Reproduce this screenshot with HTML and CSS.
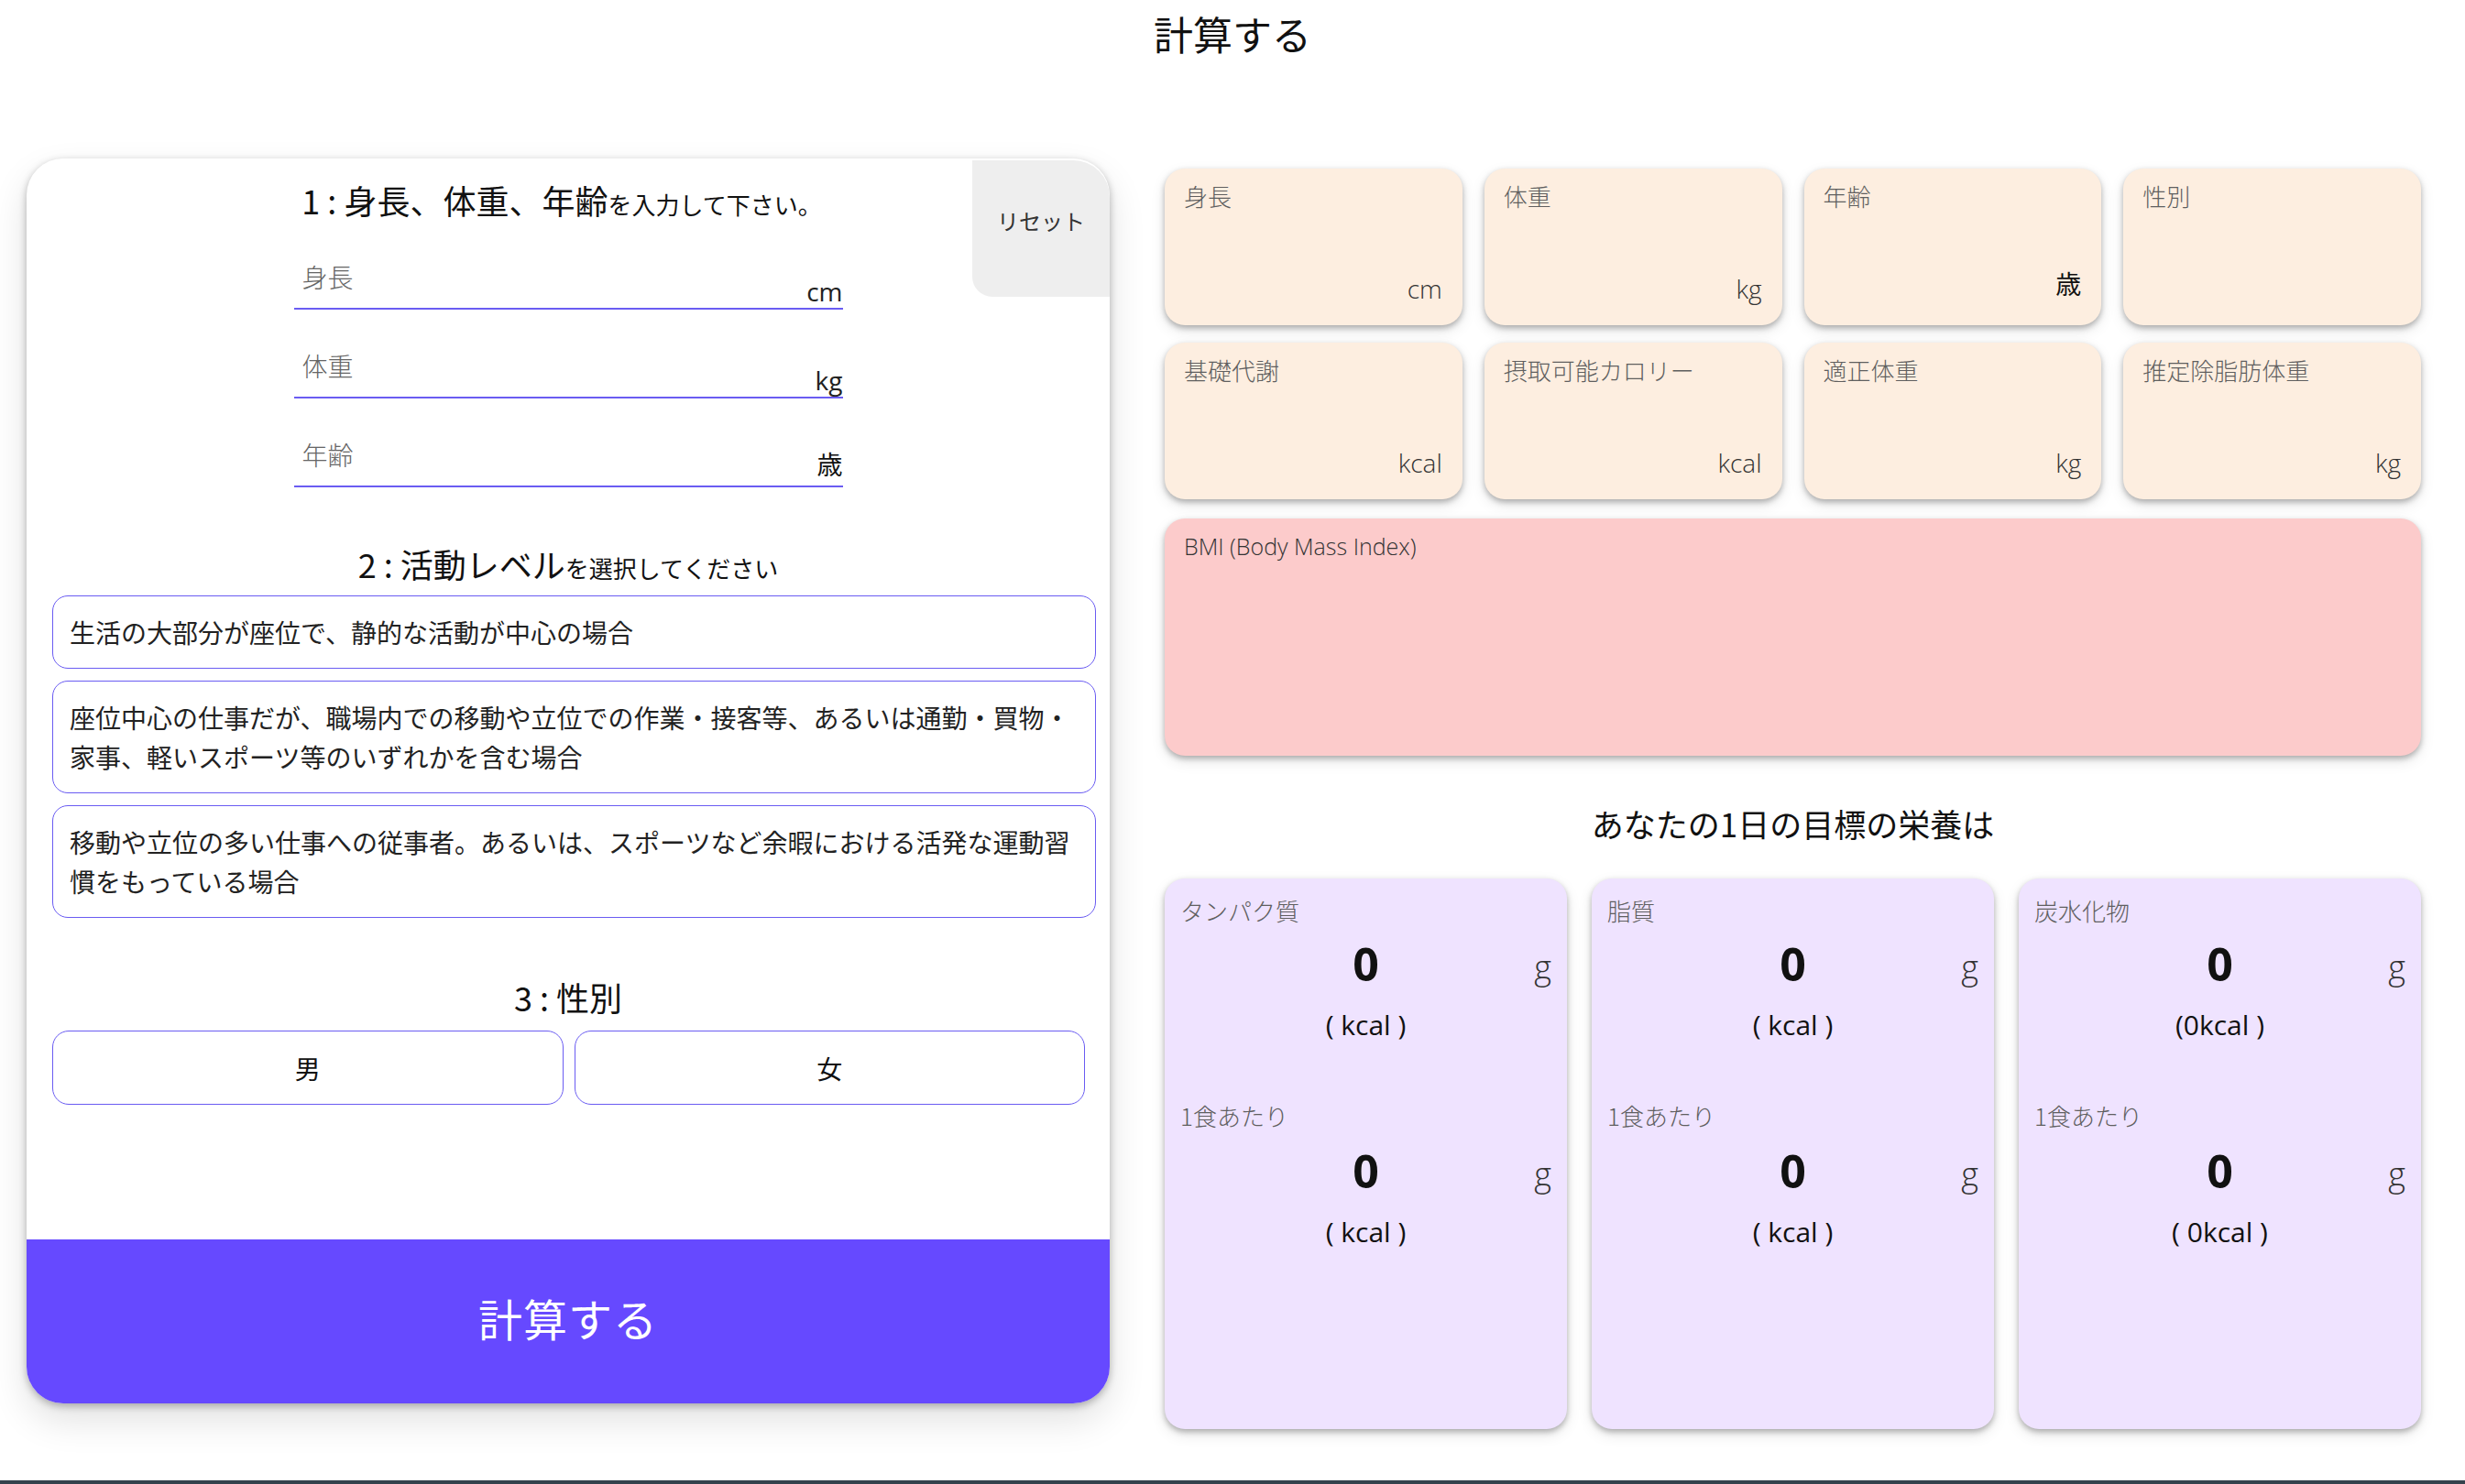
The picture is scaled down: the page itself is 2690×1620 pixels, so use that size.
FILE: index.html
```html
<!DOCTYPE html>
<html lang="ja">
<head>
<meta charset="utf-8">
<title>計算する</title>
<link rel="stylesheet" href="styles.css">
</head>
<body>
<header class="page-head">
  <h1 class="page-title">計算する</h1>
</header>
<main class="layout">
  <section class="input-card">
    <button class="reset-btn" type="button">リセット</button>
    <h2 class="step-title step-1">1 : 身長、体重、年齢<small>を入力して下さい。</small></h2>
    <div class="fields">
      <div class="field"><span class="field-label">身長</span><span class="field-unit">cm</span></div>
      <div class="field"><span class="field-label">体重</span><span class="field-unit">kg</span></div>
      <div class="field"><span class="field-label">年齢</span><span class="field-unit jp">歳</span></div>
    </div>
    <h2 class="step-title step-2">2 : 活動レベル<small>を選択してください</small></h2>
    <div class="options">
      <div class="option">生活の大部分が座位で、静的な活動が中心の場合</div>
      <div class="option">座位中心の仕事だが、職場内での移動や立位での作業・接客等、あるいは通勤・買物・<br>家事、軽いスポーツ等のいずれかを含む場合</div>
      <div class="option">移動や立位の多い仕事への従事者。あるいは、スポーツなど余暇における活発な運動習<br>慣をもっている場合</div>
    </div>
    <h2 class="step-title step-3">3 : 性別</h2>
    <div class="gender-row">
      <button class="gender-btn" type="button">男</button>
      <button class="gender-btn" type="button">女</button>
    </div>
    <button class="calc-btn" type="button">計算する</button>
  </section>

  <section class="results">
    <div class="stat-grid">
      <div class="stat-card"><span class="stat-label">身長</span><span class="stat-unit">cm</span></div>
      <div class="stat-card"><span class="stat-label">体重</span><span class="stat-unit">kg</span></div>
      <div class="stat-card"><span class="stat-label">年齢</span><span class="stat-unit jp">歳</span></div>
      <div class="stat-card"><span class="stat-label">性別</span><span class="stat-unit"></span></div>
      <div class="stat-card"><span class="stat-label">基礎代謝</span><span class="stat-unit">kcal</span></div>
      <div class="stat-card"><span class="stat-label">摂取可能カロリー</span><span class="stat-unit">kcal</span></div>
      <div class="stat-card"><span class="stat-label">適正体重</span><span class="stat-unit">kg</span></div>
      <div class="stat-card"><span class="stat-label">推定除脂肪体重</span><span class="stat-unit">kg</span></div>
    </div>
    <div class="bmi-card"><span class="bmi-label">BMI (Body Mass Index)</span></div>
    <h2 class="nutri-title">あなたの1日の目標の栄養は</h2>
    <div class="nutri-grid">
      <div class="nutri-card">
        <div class="nutri-label">タンパク質</div>
        <div class="nutri-value"><span class="num">0</span><span class="gram">g</span></div>
        <div class="nutri-kcal">( kcal )</div>
        <div class="nutri-label meal">1食あたり</div>
        <div class="nutri-value second"><span class="num">0</span><span class="gram">g</span></div>
        <div class="nutri-kcal">( kcal )</div>
      </div>
      <div class="nutri-card">
        <div class="nutri-label">脂質</div>
        <div class="nutri-value"><span class="num">0</span><span class="gram">g</span></div>
        <div class="nutri-kcal">( kcal )</div>
        <div class="nutri-label meal">1食あたり</div>
        <div class="nutri-value second"><span class="num">0</span><span class="gram">g</span></div>
        <div class="nutri-kcal">( kcal )</div>
      </div>
      <div class="nutri-card">
        <div class="nutri-label">炭水化物</div>
        <div class="nutri-value"><span class="num">0</span><span class="gram">g</span></div>
        <div class="nutri-kcal">(0kcal )</div>
        <div class="nutri-label meal">1食あたり</div>
        <div class="nutri-value second"><span class="num">0</span><span class="gram">g</span></div>
        <div class="nutri-kcal">( 0kcal )</div>
      </div>
    </div>
  </section>
</main>
<footer class="page-foot"></footer>
</body>
</html>
```

FILE: styles.css
```css
* { box-sizing: border-box; }

html, body {
  margin: 0;
  padding: 0;
  background: #ffffff;
}

body {
  width: 2690px;
  font-family: "Open Sans", "Noto Sans CJK JP", sans-serif;
  color: #111111;
}

.jp, .page-title, .step-title, .option, .gender-btn, .calc-btn, .reset-btn,
.field-label, .stat-label, .nutri-label, .nutri-title {
  font-family: "Noto Sans CJK JP", "Open Sans", sans-serif;
}

button {
  font: inherit;
  color: inherit;
  border: none;
  background: none;
  padding: 0;
  cursor: pointer;
}

/* header */
.page-head {
  height: 78px;
  display: flex;
  align-items: center;
  justify-content: center;
}
.page-title {
  margin: 0 0 6px;
  font-size: 43px;
  font-weight: 400;
  line-height: 72px;
  color: #111;
}

/* layout */
.layout {
  display: flex;
  align-items: flex-start;
  gap: 60px;
  padding-left: 29px;
  margin-top: 95px;
}

/* input card */
.input-card {
  position: relative;
  width: 1182px;
  flex: none;
  display: flex;
  flex-direction: column;
  background: #ffffff;
  border-radius: 40px;
  overflow: hidden;
  box-shadow: 0 3px 8px rgba(0, 0, 0, 0.28), 0 18px 40px rgba(0, 0, 0, 0.12);
}

.reset-btn {
  position: absolute;
  top: 2px;
  right: 0;
  width: 150px;
  height: 149px;
  background: #eeeeee;
  border-radius: 0 40px 0 22px;
  font-size: 24px;
  color: #333;
  display: flex;
  align-items: center;
  justify-content: center;
  padding-bottom: 18px;
}

.step-title {
  margin: 0;
  text-align: center;
  font-size: 36px;
  font-weight: 400;
  line-height: 50px;
  color: #111;
}
.step-title small {
  font-size: 26px;
  line-height: 1;
}
.step-1 { margin-top: 20px; padding-right: 14px; }
.step-2 { margin-top: 58px; }
.step-3 { margin-top: 61px; }

.fields {
  width: 599px;
  align-self: center;
  margin-top: 39px;
  display: flex;
  flex-direction: column;
  gap: 41px;
}
.field {
  height: 56px;
  display: flex;
  justify-content: space-between;
  border-bottom: 2px solid #6a5cf2;
}
.field-label {
  align-self: flex-start;
  padding-left: 9px;
  font-size: 28px;
  font-weight: 300;
  line-height: 40px;
  color: #666;
}
.field-unit {
  align-self: flex-end;
  font-size: 28px;
  line-height: 36px;
  color: #222;
}
.field-unit.jp { color: #111; line-height: 48px; }

.options {
  margin: 10px 15px 0 28px;
  display: flex;
  flex-direction: column;
  gap: 13px;
}
.option {
  border: 1.5px solid #6a5cf2;
  border-radius: 17px;
  padding: 17.5px 18px;
  font-size: 28px;
  line-height: 43px;
  color: #222;
  white-space: nowrap;
}

.gender-row {
  margin: 12px 27px 0 28px;
  display: flex;
  gap: 12px;
}
.gender-btn {
  flex: 1;
  height: 81px;
  border: 1.5px solid #6a5cf2;
  border-radius: 18px;
  background: #fff;
  font-size: 28px;
  color: #111;
}

.calc-btn {
  margin-top: 147px;
  height: 179px;
  width: 100%;
  background: #6649ff;
  color: #ffffff;
  font-size: 48px;
  letter-spacing: 1px;
  padding-bottom: 10px;
}

/* results */
.results {
  width: 1371px;
  flex: none;
  padding-top: 11px;
}

.stat-grid {
  display: grid;
  grid-template-columns: repeat(4, 1fr);
  grid-auto-rows: 171px;
  column-gap: 24px;
  row-gap: 19px;
}
.stat-card {
  background: #fdeee0;
  border-radius: 22px;
  padding: 12px 22px 22px 21px;
  display: flex;
  flex-direction: column;
  justify-content: space-between;
  box-shadow: 0 3px 6px rgba(0, 0, 0, 0.28), 0 6px 16px rgba(0, 0, 0, 0.1);
}
.stat-label {
  font-size: 26px;
  font-weight: 300;
  line-height: 36px;
  color: #5f5f5f;
}
.stat-unit {
  align-self: flex-end;
  font-size: 28px;
  font-weight: 300;
  line-height: 36px;
  color: #333;
}
.stat-unit.jp { color: #111; font-weight: 400; margin-bottom: 6px; }

.bmi-card {
  margin-top: 21px;
  height: 259px;
  background: #fccbcb;
  border-radius: 22px;
  padding: 12px 21px;
  box-shadow: 0 3px 6px rgba(0, 0, 0, 0.28), 0 6px 16px rgba(0, 0, 0, 0.1);
}
.bmi-label {
  font-size: 25px;
  font-weight: 300;
  line-height: 36px;
  color: #333;
}

.nutri-title {
  margin: 40px 0 26px;
  text-align: center;
  font-size: 35px;
  font-weight: 400;
  line-height: 68px;
  color: #111;
}

.nutri-grid {
  display: grid;
  grid-template-columns: repeat(3, 1fr);
  column-gap: 27px;
}
.nutri-card {
  height: 601px;
  background: #efe3ff;
  border-radius: 22px;
  padding: 15px 17px 0 17px;
  box-shadow: 0 3px 6px rgba(0, 0, 0, 0.28), 0 6px 16px rgba(0, 0, 0, 0.1);
}
.nutri-label {
  font-size: 26px;
  font-weight: 300;
  line-height: 40px;
  color: #5f5f5f;
}
.nutri-label.meal { margin-top: 56px; }
.nutri-value {
  display: grid;
  grid-template-columns: 1fr auto 1fr;
  align-items: baseline;
  line-height: 76px;
}
.nutri-value.second { margin-top: 2px; }
.num {
  grid-column: 2;
  font-size: 50px;
  font-weight: 700;
  color: #111;
}
.gram {
  grid-column: 3;
  justify-self: end;
  font-size: 36px;
  font-weight: 300;
  color: #333;
  position: relative;
  top: -2px;
}
.nutri-kcal {
  text-align: center;
  font-size: 30px;
  line-height: 46px;
  color: #111;
}

.page-foot {
  margin-top: 56px;
  height: 4px;
  background: #34424c;
}
```
